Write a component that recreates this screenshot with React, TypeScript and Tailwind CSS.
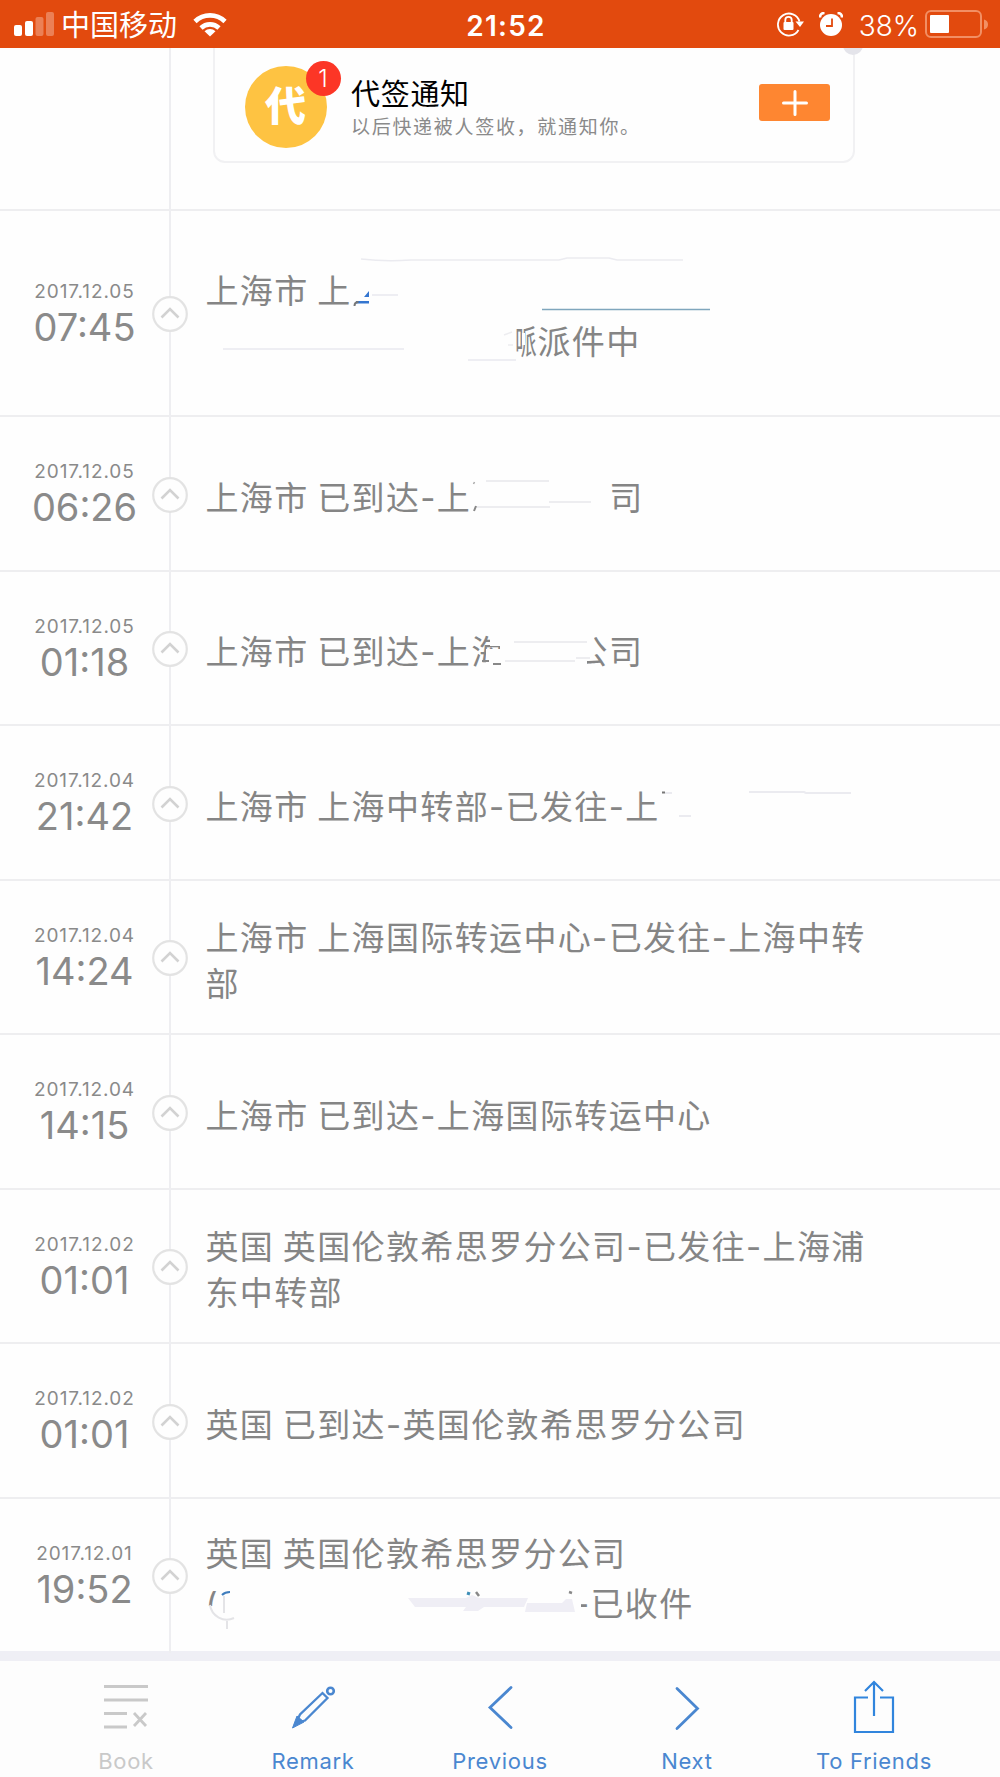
import type { ReactNode } from "react";

interface TrackEvent {
  date: string;
  time: string;
  height: string;
  content: ReactNode;
  marks?: ReactNode;
}

const events: TrackEvent[] = [
  {
    date: "2017.12.05",
    time: "07:45",
    height: "h-[206px]",
    content: (
      <div className="leading-[51px]">
        <p>上海市 上</p>
        <p className="flex pl-[309px]">
          <span className="w-[23px]">
            <span className="inline-block origin-left scale-x-[0.66]">哌</span>
          </span>
          派件中
        </p>
      </div>
    ),
    marks: (
      <>
        <path d="M522 122h3v12h-3z" fill="#fefefe" />
        <path d="M504 124l8-3M508 134h5" stroke="#ededf0" strokeWidth="1.5" />
        <path d="M361 48q25 3 50 1h148l8-2h42l8 2h66" stroke="#ebebf0" strokeWidth="1.5" fill="none" />
        <path d="M372 84h26M223 138h181M468 149h48" stroke="#eeeef3" strokeWidth="2" />
        <path d="M542 98.5h168" stroke="#7fa6bd" strokeWidth="1.3" />
        <path d="M364 86l5-6v6zM356 90h13v2.500h-13z" fill="#3576d0" />
        <path d="M354.500 95q0-4 4-4" stroke="#777" strokeWidth="2" fill="none" />
      </>
    ),
  },
  {
    date: "2017.12.05",
    time: "06:26",
    height: "h-[155px]",
    content: (
      <p>
        上海市 已到达-上<span className="inline-block w-[138px]" />司
      </p>
    ),
    marks: (
      <>
        <path d="M486 64h63M476 90h74M549 85h42" stroke="#ededf0" strokeWidth="2" />
        <path d="M474 94l2-5" stroke="#888" strokeWidth="2" />
        <path d="M473.500 67l1-2" stroke="#aaa" strokeWidth="1.500" />
      </>
    ),
  },
  {
    date: "2017.12.05",
    time: "01:18",
    height: "h-[154px]",
    content: (
      <p>
        上海市 已到达-上海<span className="inline-block w-[69px]" />公司
      </p>
    ),
    marks: (
      <>
        <path
          d="M490 58h18v16h-18zM487 77h20v13h-20zM500 56h10v44h-10zM486 77h7v18h-7zM491 88h18v14h-18zM570 58h24v28h-24zM570 82h17v16h-17z"
          fill="#fefefe"
        />
        <path d="M514 70h73M505 89h70M576 86h14" stroke="#ededf0" strokeWidth="2" />
        <path d="M482 89h7M493 92h8" stroke="#888" strokeWidth="2" />
      </>
    ),
  },
  {
    date: "2017.12.04",
    time: "21:42",
    height: "h-[155px]",
    content: <p>上海市 上海中转部-已发往-上</p>,
    marks: (
      <>
        <path d="M665 67h7M679 90h12M749 66h55l2 1h45" stroke="#ebebf0" strokeWidth="2" fill="none" />
        <path d="M662 66.500h3" stroke="#777" strokeWidth="2" />
      </>
    ),
  },
  {
    date: "2017.12.04",
    time: "14:24",
    height: "h-[154px]",
    content: <p>上海市 上海国际转运中心-已发往-上海中转部</p>,
  },
  {
    date: "2017.12.04",
    time: "14:15",
    height: "h-[155px]",
    content: <p>上海市 已到达-上海国际转运中心</p>,
  },
  {
    date: "2017.12.02",
    time: "01:01",
    height: "h-[154px]",
    content: <p>英国 英国伦敦希思罗分公司-已发往-上海浦东中转部</p>,
  },
  {
    date: "2017.12.02",
    time: "01:01",
    height: "h-[155px]",
    content: <p>英国 已到达-英国伦敦希思罗分公司</p>,
  },
  {
    date: "2017.12.01",
    time: "19:52",
    height: "h-[152px]",
    content: (
      <div className="leading-[50px]">
        <p>英国 英国伦敦希思罗分公司</p>
        <p>
          (<span className="inline-block w-[355px]" />
          -已收件
        </p>
      </div>
    ),
    marks: (
      <>
        <path d="M204 107h18v27h-18zM574 98h7v22h-7z" fill="#fefefe" />
        <path d="M210 106a17 17 0 0 0 24 13M224 97v17M227 122v8" stroke="#e4e4e7" strokeWidth="2" fill="none" />
        <path d="M222 96q3-3 8-3" stroke="#3f7dbd" strokeWidth="2" fill="none" />
        <path d="M408 99h58l6-3 7 3h49l-4 9h-40l-6 4h-15l3-4h-51zM527 104h35l4-4h6l3 13h-50z" fill="#efeef5" />
        <path d="M467 94l3 1" stroke="#3f8fb8" strokeWidth="3" />
        <path d="M476 93l3 4M569 93l3 1" stroke="#888" strokeWidth="2.500" />
      </>
    ),
  },
];

const actions = [
  {
    label: "Book",
    color: "text-[#c9c9c9]",
    icon: (
      <path d="M3 9.500h44M3 23h44M3 36.500h23M3 50h23M33 36l12 13M45 36L33 49" strokeWidth="2.800" />
    ),
  },
  {
    label: "Remark",
    color: "text-[#4a87d0]",
    icon: (
      <>
        <path d="M8 46l4-8.500L34.500 16l5 5L17 43.500z" strokeWidth="2.300" />
        <path d="M4.500 51l4.500-12 7 6z" fill="currentColor" strokeWidth="1" />
        <circle cx="42.500" cy="14" r="3.300" strokeWidth="2.600" />
      </>
    ),
  },
  {
    label: "Previous",
    color: "text-[#4a87d0]",
    icon: <path d="M36 10.500L15 30.500 36 50.500" strokeWidth="2.800" strokeLinecap="round" />,
  },
  {
    label: "Next",
    color: "text-[#4a87d0]",
    icon: <path d="M15 11.500l20.500 20L15 51.500" strokeWidth="2.800" strokeLinecap="round" />,
  },
  {
    label: "To Friends",
    color: "text-[#4a87d0]",
    icon: (
      <path
        d="M19 20.500H6v34.500h38V20.500H31M25 39V5M16 14l9-9 9 9"
        stroke="#3185dd"
        strokeWidth="2.200"
      />
    ),
  },
];

function StatusBar() {
  return (
    <header className="relative z-10 flex h-12 shrink-0 items-center bg-[#e24a0e] text-white">
      <div className="flex flex-1 items-center pl-[14px]">
        <svg width="40" height="24" viewBox="0 0 40 24" fill="currentColor">
          <rect x="0" y="13" width="8" height="11" rx="2" />
          <rect x="11" y="9" width="8" height="15" rx="2" />
          <rect x="21.500" y="5" width="8" height="19" rx="2" opacity=".3" />
          <rect x="32" y="0" width="8" height="24" rx="2" opacity=".3" />
        </svg>
        <span className="ml-[7px] pt-[3px] text-[29px] leading-none">中国移动</span>
        <svg className="ml-4" width="34" height="25" viewBox="0 0 34 25" fill="none" stroke="currentColor" strokeWidth="4.600">
          <path d="M2 9.500a21.500 21.500 0 0 1 30 0" />
          <path d="M8 16a13 13 0 0 1 18 0" />
          <path d="M17 24.500l-5.500-5.200a8 8 0 0 1 11 0z" fill="currentColor" stroke="none" />
        </svg>
      </div>
      <span className="ml-[10px] pt-[3px] text-[28px] leading-none font-semibold tracking-[1.200px]">21:52</span>
      <div className="flex flex-1 items-center justify-end pr-3">
        <svg width="28" height="26" viewBox="0 0 28 26" fill="none" stroke="currentColor" strokeWidth="1.800">
          <path d="M22.500 19A11 11 0 1 1 23.500 10.500" />
          <path d="M19.500 10.500H28l-4 5.500z" fill="currentColor" stroke="none" />
          <rect x="7.500" y="11" width="10" height="8" rx="1" fill="currentColor" stroke="none" />
          <path d="M9.300 12V9a3.200 3.200 0 0 1 6.400 0v3" />
        </svg>
        <svg className="ml-[15px]" width="24" height="24" viewBox="0 0 24 24">
          <circle cx="12" cy="13" r="11" fill="currentColor" />
          <path d="M1 5.500Q1 1 5.500 1M23 5.500Q23 1 18.500 1" stroke="currentColor" strokeWidth="2.600" fill="none" />
          <path d="M13 6.500V14H7" stroke="#e24a0e" strokeWidth="1.800" fill="none" />
        </svg>
        <span className="ml-4 pt-[3px] text-[28px] leading-none font-light">38%</span>
        <svg className="ml-[6px]" width="63" height="28" viewBox="0 0 63 28">
          <rect x="1" y="1" width="55" height="26" rx="5" fill="none" stroke="#f28f64" strokeWidth="2" />
          <rect x="5" y="5" width="19" height="18" rx="1" fill="#fff" />
          <path d="M59 9.500q4 1 4 5t-4 5z" fill="#f28f64" />
        </svg>
      </div>
    </header>
  );
}

function NoticeCard() {
  return (
    <div className="relative -mt-3 ml-[24px] flex h-[127px] w-[642px] rounded-xl border-2 border-[#f1f1f3] pt-3">
      <span className="absolute -top-[3px] -right-[10px] h-5 w-5 rounded-full bg-[#e4e4ea]" />
      <div className="relative mt-[16px] ml-[29.5px] flex h-[82px] w-[82px] shrink-0 items-center justify-center rounded-full bg-[#fec342] text-[41px] font-black text-white">
        代
        <span className="absolute -top-[5px] left-[61px] flex h-[35px] w-[35px] items-center justify-center rounded-full bg-[#fc3626] text-[24px] font-light">
          1
        </span>
      </div>
      <div className="ml-[24.5px] pt-[26px]">
        <h2 className="text-[29px] leading-[38px] tracking-[0.7px] text-black">代签通知</h2>
        <p className="text-[19px] leading-7 tracking-[1.7px] text-[#8a8a8a]">以后快递被人签收，就通知你。</p>
      </div>
      <button className="absolute top-[46px] right-[23px] flex h-[37px] w-[71px] items-center justify-center rounded-[3px] bg-[#fe8631]">
        <svg width="26" height="26" viewBox="0 0 26 26" stroke="#fff" strokeWidth="3" strokeLinecap="round">
          <path d="M13 1.500v23M1.500 13h23" />
        </svg>
      </button>
    </div>
  );
}

function EventRow({ event }: { event: TrackEvent }) {
  return (
    <li className={`relative flex shrink-0 border-b-2 border-[#eeeef0] last:border-b-0 ${event.height}`}>
      <div className="flex w-[152px] flex-col justify-center pl-[17px] text-center text-[#8a8a8a]">
        <time className="text-[19px] leading-7 tracking-[0.9px]">{event.date}</time>
        <span className="text-[38px] leading-[43px]">{event.time}</span>
      </div>
      <div className="relative flex w-[37px] items-center justify-center">
        <span className="absolute inset-y-0 left-[17px] -mb-[2px] w-[2px] bg-[#eeeef1]" />
        <svg className="relative mt-[2px] mr-px" width="36" height="36" viewBox="0 0 36 36" fill="#fefefe">
          <circle cx="18" cy="18" r="16.800" stroke="#e3e3e3" strokeWidth="2.200" />
          <path d="M9.500 21.500L18 13l8.500 8.500" stroke="#d2d2d2" strokeWidth="2.600" fill="none" />
        </svg>
      </div>
      <div className="flex w-[680px] flex-col justify-center pt-[8px] pl-[16.500px] text-[33px] leading-[46px] tracking-[1.360px] text-[#858585] [word-spacing:-2px]">
        {event.content}
      </div>
      {event.marks && (
        <svg className="absolute inset-0 h-full w-full" fill="none">
          {event.marks}
        </svg>
      )}
    </li>
  );
}

function TabBar() {
  return (
    <nav className="flex flex-1 justify-center border-t-[10px] border-[#efeff5] bg-[#fdfdfd]">
      {actions.map((action) => (
        <button
          key={action.label}
          className={`flex w-[187px] flex-col items-center pt-[16px] ${action.color}`}
        >
          <svg width="50" height="60" viewBox="0 0 50 60" fill="none" stroke="currentColor">
            {action.icon}
          </svg>
          <span className="mt-[9px] text-[22px] leading-[30px] tracking-[0.7px] whitespace-nowrap">{action.label}</span>
        </button>
      ))}
    </nav>
  );
}

export default function App() {
  return (
    <div className="flex h-[1777px] w-[1000px] flex-col overflow-hidden bg-[#fefefe] font-[Inter,'Noto_Sans_CJK_SC',sans-serif]">
      <StatusBar />
      <section className="flex h-[163px] shrink-0 border-b-2 border-[#eeeef0] pl-[169px]">
        <span className="-mb-[2px] w-[2px] bg-[#eeeef1]" />
        <div className="pl-[18px]">
          <NoticeCard />
        </div>
      </section>
      <ul className="flex shrink-0 flex-col">
        {events.map((event, index) => (
          <EventRow key={index} event={event} />
        ))}
      </ul>
      <TabBar />
    </div>
  );
}
